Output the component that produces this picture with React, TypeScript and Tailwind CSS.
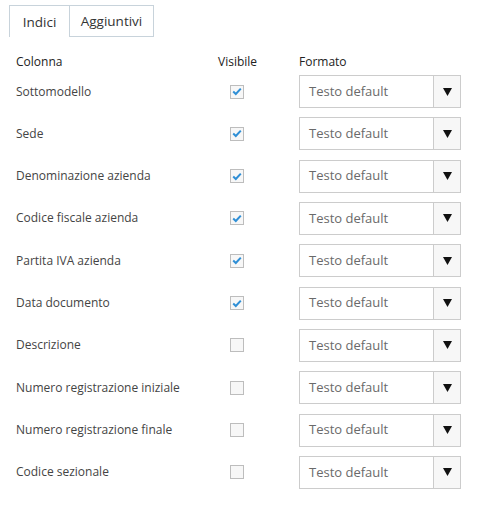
import React from 'react';

const ROWS: { name: string; visible: boolean }[] = [
  { name: 'Sottomodello', visible: true },
  { name: 'Sede', visible: true },
  { name: 'Denominazione azienda', visible: true },
  { name: 'Codice fiscale azienda', visible: true },
  { name: 'Partita IVA azienda', visible: true },
  { name: 'Data documento', visible: true },
  { name: 'Descrizione', visible: false },
  { name: 'Numero registrazione iniziale', visible: false },
  { name: 'Numero registrazione finale', visible: false },
  { name: 'Codice sezionale', visible: false },
];

function Checkbox({ checked }: { checked: boolean }) {
  return (
    <div className="w-[14px] h-[14px] border border-[#bdbdbd] bg-[#f7f7f7] flex items-center justify-center">
      {checked && (
        <svg width="10" height="9" viewBox="0 0 10 9">
          <path d="M1.2 4.6 L3.8 7 L8.8 1.6" fill="none" stroke="#2f8fd6" strokeWidth="2" />
        </svg>
      )}
    </div>
  );
}

function Select() {
  return (
    <div className="flex h-[33px] w-[162px] border border-[#cccccc] bg-white">
      <div className="flex-1 flex items-center pl-[9px] text-[13px] text-[#6a6a6a]">Testo default</div>
      <div className="w-[27px] border-l border-[#cccccc] bg-[#f7f7f7] flex items-center justify-center">
        <svg width="9" height="8" viewBox="0 0 9 8">
          <path d="M0 0 H9 L4.5 8 Z" fill="#111" />
        </svg>
      </div>
    </div>
  );
}

export default function App() {
  return (
    <div className="w-[484px] h-[511px] bg-white text-[#333] font-['Open_Sans',sans-serif]">
      {/* Tabs */}
      <div className="flex pl-[9px] pt-[5px] h-[37px]">
        <div className="w-[60px] pt-[1px] border-t border-l border-[#c8d3db] flex items-center justify-center text-[13.5px] text-[#333]">
          Indici
        </div>
        <div className="w-[85px] pt-[1px] border border-[#c8d3db] flex items-center justify-center text-[13.5px] text-[#333]">
          Aggiuntivi
        </div>
      </div>

      {/* Table */}
      <div className="grid grid-cols-[202px_81px_162px] pl-[16px] pt-[15px] text-[12px]">
        <div className="h-[20px] flex items-center text-[#222]">Colonna</div>
        <div className="h-[20px] flex items-center text-[#222]">Visibile</div>
        <div className="h-[20px] flex items-center text-[#222]">Formato</div>
        {ROWS.map(row => (
          <React.Fragment key={row.name}>
            <div className="h-[33px] mt-[3px] mb-[6.33px] flex items-center text-[#444]">{row.name}</div>
            <div className="h-[33px] mt-[3px] mb-[6.33px] flex items-center pl-[12px]">
              <Checkbox checked={row.visible} />
            </div>
            <div className="mt-[3px] mb-[6.33px]">
              <Select />
            </div>
          </React.Fragment>
        ))}
      </div>
    </div>
  );
}
